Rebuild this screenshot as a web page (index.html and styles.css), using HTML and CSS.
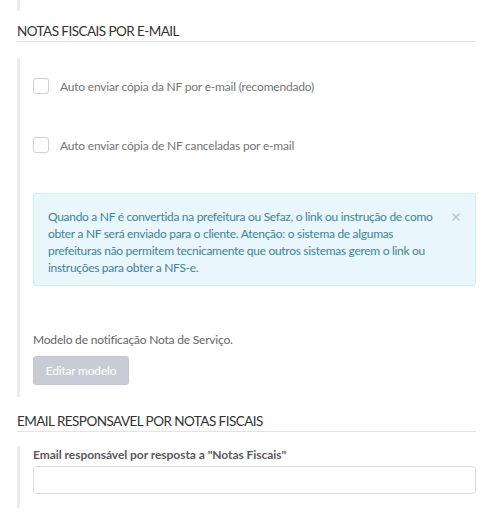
FILE: index.html
```html
<!DOCTYPE html>
<html lang="pt-BR">
<head>
<meta charset="utf-8">
<title>Notas fiscais por e-mail</title>
<link rel="stylesheet" href="styles.css">
</head>
<body>
<div class="page">
  <div class="block block-top"></div>

  <h2 class="section-title">Notas fiscais por e-mail</h2>
  <div class="block block-email">
    <label class="check">
      <span class="box"></span>
      <span class="check-text">Auto enviar cópia da NF por e-mail (recomendado)</span>
    </label>
    <label class="check check-second">
      <span class="box"></span>
      <span class="check-text">Auto enviar cópia de NF canceladas por e-mail</span>
    </label>

    <div class="alert">
      <p class="alert-text">Quando a NF é convertida na prefeitura ou Sefaz, o link ou instrução de como obter a NF será enviado para o cliente. Atenção: o sistema de algumas prefeituras não permitem tecnicamente que outros sistemas gerem o link ou instruções para obter a NFS-e.</p>
      <button class="alert-close" type="button">&times;</button>
    </div>

    <p class="model-text">Modelo de notificação Nota de Serviço.</p>
    <button class="btn-disabled" type="button">Editar modelo</button>
  </div>

  <h2 class="section-title section-title-second">Email responsavel por notas fiscais</h2>
  <div class="block block-reply">
    <label class="field-label" for="reply-email">Email responsável por resposta a "Notas Fiscais"</label>
    <input class="field-input" id="reply-email" type="text">
  </div>
</div>
</body>
</html>
```

FILE: styles.css
```css
* {
  box-sizing: border-box;
}

body {
  margin: 0;
  background: #fff;
  font-family: Lato, "Open Sans", sans-serif;
  font-size: 12px;
  line-height: 17px;
  letter-spacing: -0.2px;
  color: #555;
}

.page {
  width: 476px;
  padding-left: 17px;
}

.block {
  border-left: 3px solid #ececec;
  padding-left: 13px;
}

.block-top {
  height: 11px;
}

.section-title {
  margin: 12px 0 0;
  padding-bottom: 1px;
  border-bottom: 1px solid #e3e3e3;
  font-size: 13.5px;
  font-weight: 400;
  line-height: 17px;
  letter-spacing: -0.55px;
  text-transform: uppercase;
  color: #333;
}

.section-title-second {
  margin-top: 16px;
}

.block-email {
  margin-top: 16px;
  padding-top: 20px;
  padding-bottom: 12px;
}

.check {
  display: flex;
  align-items: center;
  gap: 11px;
  height: 16px;
}

.check-second {
  margin-top: 43px;
}

.box {
  width: 16px;
  height: 16px;
  border: 1px solid #cfcfcf;
  border-radius: 3px;
  background: #fff;
}

.check-text {
  color: #747474;
}

.alert {
  display: flex;
  align-items: flex-start;
  gap: 11px;
  margin-top: 40px;
  padding: 14px 14px 9px 14px;
  background: #e9f6fb;
  border: 1px solid #d3eef6;
  border-radius: 3px;
}

.alert-text {
  flex: 1;
  margin: 0;
  letter-spacing: -0.3px;
  color: #41839a;
}

.alert-close {
  margin-top: 0;
  padding: 0;
  width: 10px;
  border: 0;
  background: none;
  font-family: inherit;
  font-size: 17px;
  line-height: 17px;
  color: #b9c4c8;
}

.model-text {
  margin: 45px 0 0;
  color: #666;
}

.btn-disabled {
  display: block;
  margin-top: 8px;
  width: 96px;
  height: 29px;
  padding: 0;
  border: 1px solid #c3c6ce;
  border-radius: 3px;
  background: #c9ccd4;
  font-family: inherit;
  font-size: 12px;
  letter-spacing: -0.2px;
  color: #fff;
}

.block-reply {
  margin-top: 14px;
  padding-bottom: 14px;
}

.field-label {
  display: block;
  font-weight: 700;
  letter-spacing: -0.05px;
  color: #5a5a5a;
}

.field-input {
  display: block;
  width: 100%;
  height: 28px;
  margin-top: 3px;
  border: 1px solid #dcdcdc;
  border-radius: 4px;
  background: #fff;
}
```
